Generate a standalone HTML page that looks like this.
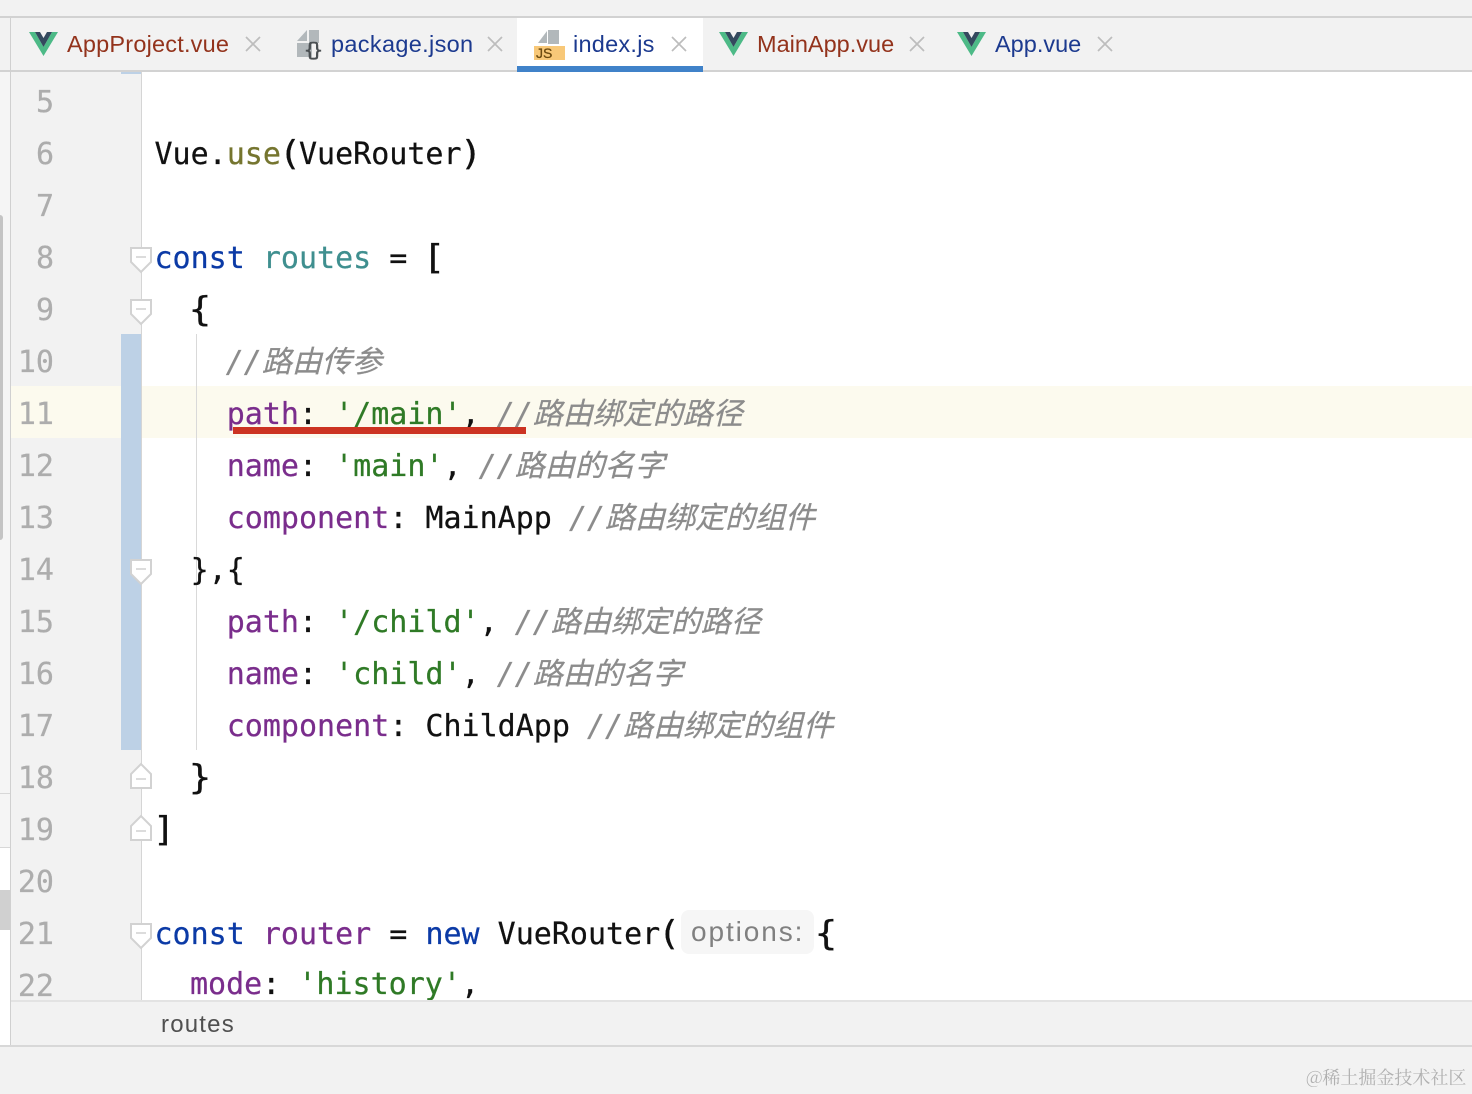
<!DOCTYPE html>
<html><head><meta charset="utf-8"><style>
html,body{margin:0;padding:0}
body{width:1472px;height:1094px;position:relative;overflow:hidden;background:#fff}
div,svg{position:absolute}
.l{left:154.500px;height:52px;font:30px/52px "DejaVu Sans Mono","Noto Sans CJK SC",monospace;white-space:pre;color:#111;-webkit-text-stroke:0.25px currentColor}
.n{left:12px;width:42px;text-align:right;height:52px;font:30px/52px "DejaVu Sans Mono",monospace;color:#adadad;-webkit-text-stroke:0.25px currentColor}
.k{color:#0b3aa6}.f{color:#7a2d8c}.s{color:#2f7a26}.c{color:#8c8c8c;font-style:italic;font-family:"DejaVu Sans Mono","Noto Sans CJK SC",monospace;margin-left:-1px}.u{color:#75752f}.t{color:#3f8f8f}
.b{display:inline-block;transform:scale(1.25,1.12)}
.tab{font:23.500px/28px "Liberation Sans",sans-serif;top:30px;white-space:pre}
.x{top:36px;width:16px;height:16px}
</style></head><body>
<!-- chrome -->
<div style="left:0;top:0;width:1472px;height:72px;background:#f2f2f2"></div>
<div style="left:0;top:16px;width:1472px;height:2px;background:#d2d2d2"></div>
<div style="left:0;top:70px;width:1472px;height:2px;background:#d2d2d2"></div>
<div style="left:517px;top:18px;width:186px;height:54px;background:#fff"></div>
<div style="left:517px;top:66px;width:186px;height:6px;background:#4082c9"></div>
<!-- left strip -->
<div style="left:0;top:72px;width:10px;height:1022px;background:#f5f5f5"></div>
<div style="left:0;top:215px;width:3px;height:325px;background:#c4c4c4;border-radius:0 3px 3px 0"></div>
<div style="left:0;top:793px;width:10px;height:1px;background:#d8d8d8"></div>
<div style="left:0;top:847px;width:10px;height:198px;background:#fff;border-top:1px solid #d8d8d8;box-sizing:border-box"></div>
<div style="left:0;top:890px;width:10px;height:40px;background:#d0d0d0"></div>
<div style="left:10px;top:18px;width:1px;height:1028px;background:#d0d0d0"></div>
<!-- gutter -->
<div style="left:11px;top:72px;width:130px;height:929px;background:#f2f2f2"></div>
<div style="left:140.500px;top:72px;width:1.500px;height:929px;background:#d5d5d5"></div>
<div style="left:11px;top:386px;width:110px;height:52px;background:#fcfaee"></div>
<div style="left:142px;top:386px;width:1330px;height:52px;background:#fcfaee"></div>
<div style="left:121px;top:72px;width:20px;height:2px;background:#bdd1e6"></div>
<div style="left:121px;top:334px;width:20px;height:416px;background:#bdd1e6"></div>
<div style="left:196px;top:334px;width:1px;height:416px;background:#d9d9d9"></div>
<!-- line numbers -->
<div class="n" style="top:77px">5</div>
<div class="n" style="top:129px">6</div>
<div class="n" style="top:181px">7</div>
<div class="n" style="top:233px">8</div>
<div class="n" style="top:285px">9</div>
<div class="n" style="top:337px">10</div>
<div class="n" style="top:389px">11</div>
<div class="n" style="top:441px">12</div>
<div class="n" style="top:493px">13</div>
<div class="n" style="top:545px">14</div>
<div class="n" style="top:597px">15</div>
<div class="n" style="top:649px">16</div>
<div class="n" style="top:701px">17</div>
<div class="n" style="top:753px">18</div>
<div class="n" style="top:805px">19</div>
<div class="n" style="top:857px">20</div>
<div class="n" style="top:909px">21</div>
<div style="left:11px;top:960px;width:130px;height:41px;overflow:hidden"><div class="n" style="left:1px;top:1px">22</div></div>
<!-- fold markers -->
<svg style="left:129px;top:246px" width="24" height="28"><path d="M2 2H22V16L12 26L2 16Z" fill="#fff" stroke="#d2d2d2" stroke-width="2"/><path d="M7 11H17" stroke="#d0d0d0" stroke-width="1.500"/></svg>
<svg style="left:129px;top:298px" width="24" height="28"><path d="M2 2H22V16L12 26L2 16Z" fill="#fff" stroke="#d2d2d2" stroke-width="2"/><path d="M7 11H17" stroke="#d0d0d0" stroke-width="1.500"/></svg>
<svg style="left:129px;top:558px" width="24" height="28"><path d="M2 2H22V16L12 26L2 16Z" fill="#fff" stroke="#d2d2d2" stroke-width="2"/><path d="M7 11H17" stroke="#d0d0d0" stroke-width="1.500"/></svg>
<svg style="left:129px;top:922px" width="24" height="28"><path d="M2 2H22V16L12 26L2 16Z" fill="#fff" stroke="#d2d2d2" stroke-width="2"/><path d="M7 11H17" stroke="#d0d0d0" stroke-width="1.500"/></svg>
<svg style="left:129px;top:762px" width="24" height="28"><path d="M2 26H22V12L12 2L2 12Z" fill="#fff" stroke="#d2d2d2" stroke-width="2"/><path d="M7 17H17" stroke="#d0d0d0" stroke-width="1.500"/></svg>
<svg style="left:129px;top:814px" width="24" height="28"><path d="M2 26H22V12L12 2L2 12Z" fill="#fff" stroke="#d2d2d2" stroke-width="2"/><path d="M7 17H17" stroke="#d0d0d0" stroke-width="1.500"/></svg>
<!-- code -->
<div class="l" style="top:129px">Vue.<span class="u">use</span><span class="b">(</span>VueRouter<span class="b">)</span></div>
<div class="l" style="top:233px"><span class="k">const</span> <span class="t">routes</span> = <span class="b">[</span></div>
<div class="l" style="top:285px">  <span class="b">{</span></div>
<div class="l" style="top:337px">    <span class="c">//路由传参</span></div>
<div class="l" style="top:389px">    <span class="f">path</span>: <span class="s">'/main'</span>, <span class="c">//路由绑定的路径</span></div>
<div class="l" style="top:441px">    <span class="f">name</span>: <span class="s">'main'</span>, <span class="c">//路由的名字</span></div>
<div class="l" style="top:493px">    <span class="f">component</span>: MainApp <span class="c">//路由绑定的组件</span></div>
<div class="l" style="top:545px">  },{</div>
<div class="l" style="top:597px">    <span class="f">path</span>: <span class="s">'/child'</span>, <span class="c">//路由绑定的路径</span></div>
<div class="l" style="top:649px">    <span class="f">name</span>: <span class="s">'child'</span>, <span class="c">//路由的名字</span></div>
<div class="l" style="top:701px">    <span class="f">component</span>: ChildApp <span class="c">//路由绑定的组件</span></div>
<div class="l" style="top:753px">  <span class="b">}</span></div>
<div class="l" style="top:805px"><span class="b">]</span></div>
<div class="l" style="top:909px"><span class="k">const</span> <span class="f">router</span> = <span class="k">new</span> VueRouter<span class="b">(</span></div>
<div style="left:681px;top:910px;width:133px;height:44px;background:#f6f6f6;border-radius:8px"></div>
<div style="left:691px;top:912px;font:28px/40px 'Liberation Sans',sans-serif;letter-spacing:1.900px;color:#808080;white-space:pre">options:</div>
<div class="l" style="left:817px;top:909px"><span class="b">{</span></div>
<div style="left:143px;top:960px;width:700px;height:41px;overflow:hidden"><div class="l" style="left:47px;top:-1px"><span class="f">mode</span>: <span class="s">'history'</span>,</div></div>
<!-- red underline -->
<div style="left:233px;top:427px;width:293px;height:7px;background:#cc3322"></div>
<!-- tabs -->
<svg style="left:29px;top:30px" width="30" height="26" viewBox="0 0 30 26"><path d="M0 2H6L14.500 17L23 2H29L14.500 26Z" fill="#4dba87"/><path d="M6 2H11L14.500 8L18 2H23L14.500 17Z" fill="#34495e"/></svg>
<div class="tab" style="left:67px;color:#93331c;letter-spacing:0.200px">AppProject.vue</div>
<svg class="x" style="left:245px" viewBox="0 0 16 16"><path d="M1 1L15 15M15 1L1 15" stroke="#bdbdbd" stroke-width="1.700"/></svg>
<svg style="left:296px;top:29px" width="30" height="32" viewBox="0 0 30 32"><path d="M1 12L11 1V12Z" fill="#b2b8bb"/><path d="M13 1H23V14H16V28H1V14H13Z" fill="#b2b8bb"/><text x="8" y="27" font-family="DejaVu Sans Mono,monospace" font-size="19" fill="#4a4f52" stroke="#4a4f52" stroke-width="0.500" textLength="19">{}</text></svg>
<div class="tab" style="left:331px;color:#1c3a8f;letter-spacing:0.330px">package.json</div>
<svg class="x" style="left:487px" viewBox="0 0 16 16"><path d="M1 1L15 15M15 1L1 15" stroke="#bdbdbd" stroke-width="1.700"/></svg>
<svg style="left:532px;top:29px" width="34" height="32" viewBox="0 0 34 32"><path d="M6 14L15 2V14Z" fill="#b2b8bb"/><path d="M16 1H27V15H6V15H16Z" fill="#b2b8bb"/><rect x="2" y="17" width="31" height="14" fill="#f8c878"/><text x="4" y="29" font-family="Liberation Sans,sans-serif" font-size="14" fill="#6b4a10" stroke="#6b4a10" stroke-width="0.300">JS</text></svg>
<div class="tab" style="left:573px;color:#1c3a8f;letter-spacing:0.250px">index.js</div>
<svg class="x" style="left:671px" viewBox="0 0 16 16"><path d="M1 1L15 15M15 1L1 15" stroke="#bdbdbd" stroke-width="1.700"/></svg>
<svg style="left:719px;top:30px" width="30" height="26" viewBox="0 0 30 26"><path d="M0 2H6L14.500 17L23 2H29L14.500 26Z" fill="#4dba87"/><path d="M6 2H11L14.500 8L18 2H23L14.500 17Z" fill="#34495e"/></svg>
<div class="tab" style="left:757px;color:#93331c">MainApp.vue</div>
<svg class="x" style="left:909px" viewBox="0 0 16 16"><path d="M1 1L15 15M15 1L1 15" stroke="#bdbdbd" stroke-width="1.700"/></svg>
<svg style="left:957px;top:30px" width="30" height="26" viewBox="0 0 30 26"><path d="M0 2H6L14.500 17L23 2H29L14.500 26Z" fill="#4dba87"/><path d="M6 2H11L14.500 8L18 2H23L14.500 17Z" fill="#34495e"/></svg>
<div class="tab" style="left:995px;color:#1c3a8f">App.vue</div>
<svg class="x" style="left:1097px" viewBox="0 0 16 16"><path d="M1 1L15 15M15 1L1 15" stroke="#bdbdbd" stroke-width="1.700"/></svg>
<!-- breadcrumb -->
<div style="left:11px;top:1000px;width:1461px;height:2px;background:#e3e3e3"></div>
<div style="left:11px;top:1002px;width:1461px;height:43px;background:#f2f2f2"></div>
<div style="left:161px;top:1009px;font:24px/32px 'Liberation Sans',sans-serif;letter-spacing:1.200px;color:#505050">routes</div>
<div style="left:0;top:1045px;width:1472px;height:2px;background:#d8d8d8"></div>
<div style="left:0;top:1047px;width:1472px;height:47px;background:#f2f2f2"></div>
<div style="left:1306px;top:1065px;font:18px/24px 'Noto Serif CJK SC','Liberation Serif',serif;color:#b0b0b0;white-space:pre">@稀土掘金技术社区</div>
</body></html>
